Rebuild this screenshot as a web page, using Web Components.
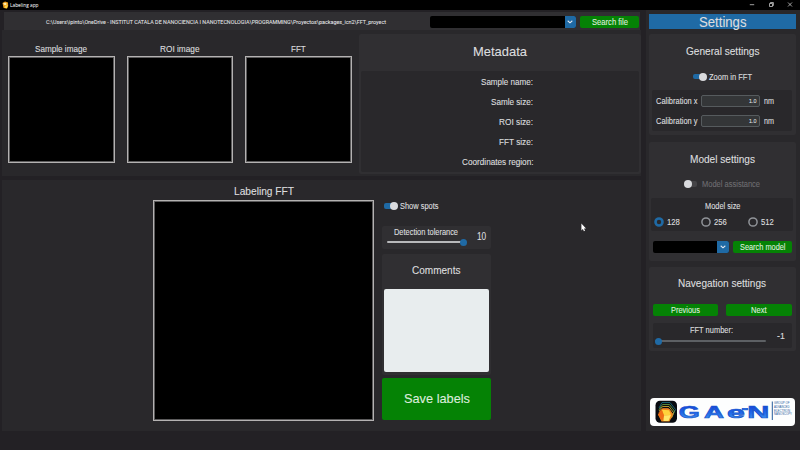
<!DOCTYPE html>
<html lang="en">
<head>
<meta charset="utf-8">
<title>Labeling app</title>
<style>
html,body{margin:0;width:800px;height:450px;overflow:hidden;background:#232125}
body{font-family:"Liberation Sans",Arial,sans-serif;color:#dcdddf}
</style>
</head>
<body>
<labeling-app></labeling-app>
<script>
const define = (name, css, html, init) => {
  const tpl = document.createElement('template');
  tpl.innerHTML = `<style>*{box-sizing:border-box}${css}</style>${html}`;
  customElements.define(name, class extends HTMLElement {
    connectedCallback() {
      if (this.shadowRoot) return;
      this.attachShadow({mode: 'open'}).append(tpl.content.cloneNode(true));
      if (init) init(this, this.shadowRoot);
    }
  });
};

/* Single-line label: size = font size, w = drawn width, h = line box height */
define('fit-text',
  ':host{display:block;flex:none;white-space:nowrap}span{display:inline-block;transform-origin:0 50%;-webkit-text-stroke:.12px currentColor}',
  '<span><slot></slot></span>',
  (el, root) => {
    const h = el.getAttribute('h') || 12, w = +el.getAttribute('w');
    el.style.fontSize = el.getAttribute('size') + 'px';
    el.style.height = el.style.lineHeight = h + 'px';
    el.style.width = w + 'px';
    const span = root.querySelector('span');
    span.style.transform = `scaleX(${w / span.getBoundingClientRect().width})`;
  });

define('ui-card', ':host{display:flex;flex-direction:column;box-sizing:border-box;background:var(--fill,#302f32);border-radius:2px;flex:none}', '<slot></slot>');
define('ui-button', ':host{display:flex;align-items:center;justify-content:center;box-sizing:border-box;background:#058205;border-radius:2px;height:12px;color:#dcecdc;flex:none}', '<slot></slot>');
define('ui-combo',
  ':host{display:flex;height:12px;background:#000;border-radius:2px;overflow:hidden;justify-content:flex-end;flex:none}div{width:11.5px;background:#1f6aa5;display:flex;align-items:center;justify-content:center}',
  '<div><svg width="6" height="4" viewBox="0 0 6 4"><path d="M1 1 3 2.8 5 1" fill="none" stroke="#dce4ee" stroke-width="1.1" stroke-linecap="round"/></svg></div>');
define('ui-toggle',
  ':host{display:flex;width:14px;height:8px;align-items:center;flex:none}div{width:13px;height:5.4px;border-radius:2px;background:#1f6aa5;display:flex;align-items:center;justify-content:flex-end}i{width:8px;height:8px;border-radius:50%;background:#d9dadd;flex:none;margin-right:-1px}:host([off]) div{background:#454447;justify-content:flex-start}:host([off]) i{margin:0}',
  '<div><i></i></div>');
define('ui-slider',
  ':host{display:flex;height:7px;align-items:center;flex:none}div{flex:1;height:2px;border-radius:1px;background:var(--track,#aaa);display:flex;align-items:center;justify-content:flex-end}i{width:7px;height:7px;border-radius:50%;background:#1f6aa5;flex:none;margin:0 -2px 0 0}:host([start]) div{justify-content:flex-start;height:1.5px}:host([start]) i{margin:0}',
  '<div><i></i></div>');
define('ui-radio',
  ':host{display:flex;align-items:center;gap:2.5px;height:12px;flex:none}svg{width:10px;height:10px}circle{fill:none;stroke:#919499;stroke-width:1.5}:host([on]) circle{stroke:#1f6aa5;stroke-width:2.6;r:3.5px}',
  '<svg viewBox="0 0 10 10"><circle cx="5" cy="5" r="4.1"/></svg><slot></slot>');
define('ui-entry', ':host{display:flex;align-items:center;justify-content:flex-end;box-sizing:border-box;width:59px;height:12px;padding-right:2.5px;background:#343638;border:1px solid #565b5e;border-radius:2px;flex:none}', '<slot></slot>');
define('calibration-row', ':host{display:flex;align-items:center;height:20px;gap:4px;padding-left:3.5px}', '<slot></slot><ui-entry><fit-text size="6" w="7.5" h="10">1.0</fit-text></ui-entry><fit-text size="8.8" w="10">nm</fit-text>');
define('image-frame',
  ':host{display:flex;flex-direction:column;align-items:center;flex:none}div{background:#000;border:1px solid #b4b2b2;box-shadow:inset 0 0 0 1px #5b5a5b;width:var(--side);height:var(--side);margin-top:var(--gap,0)}',
  '<slot></slot><div></div>');

define('title-bar',
  ':host{display:flex;height:10px;background:#000;align-items:center;padding:0 7px 0 2px;box-sizing:border-box;font-family:"Open Sans",sans-serif}.logo{margin-right:1px}.g{flex:1}.win{width:45px}',
  `<svg class="logo" width="7" height="8" viewBox="0 0 7 8"><path d="M.5 2 3 .6 6 1.6 6.2 5 5 7.4 1.6 7Z" fill="#eb9c19"/><path d="m1 2.6 2.5-.9L5 3 3 4.6Z" fill="#fff0b0"/><path d="M3.2 5 5.8 3.8 5 7.2 2.6 7Z" fill="#ffd447"/></svg>
  <fit-text size="5.8" w="28.5" h="10">Labeling app</fit-text><span class="g"></span>
  <svg class="win" height="8" viewBox="0 0 45 8" fill="none" stroke="#c8c8c8" stroke-width=".8"><path d="M1.8 3.7h4.4M21.5 2.5h3v3h-3zM22.4 2.5v-1h3v3h-.9M40 1.5l4 4M44 1.5l-4 4"/></svg>`);

define('file-bar',
  ':host{display:flex;align-items:center;height:18px;background:#302f32;margin-left:2px;padding-left:42px;box-sizing:border-box;width:636px}fit-text{font-family:Roboto,sans-serif;margin-top:1px}.b{font-family:"Liberation Sans",sans-serif;margin-top:0}ui-combo{width:146.5px;margin:1px 4px 0 43.5px}ui-button{width:59px;margin-top:1px}',
  `<fit-text size="6.1" w="340">C:\\Users\\ipinto\\OneDrive - INSTITUT CATALA DE NANOCIENCIA I NANOTECNOLOGIA\\PROGRAMMING\\Proyectos\\packages_icn2\\FFT_proyect</fit-text>
  <ui-combo></ui-combo><ui-button><fit-text class="b" size="8.5" w="36">Search file</fit-text></ui-button>`);

define('metadata-card',
  ':host{display:block}.card{width:282px;height:140px;padding:11px 2px 2px;align-items:center}.in{--fill:#29282b;width:278px;height:101px;margin-top:12px;padding:1px 106px 0 0;align-items:flex-end}',
  `<ui-card class="card"><fit-text size="13.6" w="54" h="14">Metadata</fit-text><ui-card class="in">
  <fit-text size="9" w="52" h="20">Sample name:</fit-text><fit-text size="9" w="42" h="20">Samle size:</fit-text><fit-text size="9" w="34" h="20">ROI size:</fit-text><fit-text size="9" w="34" h="20">FFT size:</fit-text><fit-text size="9" w="71.5" h="20">Coordinates region:</fit-text>
  </ui-card></ui-card>`);

define('top-panel',
  ':host{display:flex;background:#29282b;height:146px;padding:4px 0 0 6px;box-sizing:border-box;justify-content:space-between}.imgs{display:flex;gap:12px;padding-top:9px}image-frame{--side:106.5px;--gap:1px}',
  `<div class="imgs"><image-frame><fit-text size="9.2" w="52">Sample image</fit-text></image-frame><image-frame><fit-text size="9.2" w="39.5">ROI image</fit-text></image-frame><image-frame><fit-text size="9.2" w="14.8">FFT</fit-text></image-frame></div><metadata-card></metadata-card>`);

define('labeling-panel',
  `:host{display:flex;background:#29282b;height:251px;margin-top:4px;padding-left:151px;box-sizing:border-box}
  image-frame{--side:221px;--gap:1.5px;padding-top:5px}
  .side{width:109px;margin-left:8px;padding-top:20px}
  .row{display:flex;align-items:center;gap:2px;height:12px;padding-left:1.5px}
  .tol{height:23px;margin-top:13.5px;flex-direction:row;padding:0 0 0 5px}
  .tol ui-slider{width:78px;margin-top:1px;--track:#b7b8ba}
  .tol fit-text{margin-left:7px}.tol fit-text.n{margin:5px 0 0 11.5px}
  .com{height:121px;margin-top:5.5px;padding-top:10px;align-items:center}
  .area{width:104.5px;height:83.5px;background:#e8edee;border-radius:2px;margin-top:12.5px}
  .save{height:42px;margin-top:3px}`,
  `<image-frame><fit-text size="11" w="60" h="13">Labeling FFT</fit-text></image-frame>
  <div class="side"><div class="row"><ui-toggle></ui-toggle><fit-text size="8.5" w="38.5">Show spots</fit-text></div>
  <ui-card class="tol"><div><fit-text size="8.5" w="64">Detection tolerance</fit-text><ui-slider></ui-slider></div><fit-text class="n" size="10" w="9.2">10</fit-text></ui-card>
  <ui-card class="com"><fit-text size="11" w="48.5">Comments</fit-text><div class="area"></div></ui-card>
  <ui-button class="save"><fit-text size="13.6" w="66" h="14">Save labels</fit-text></ui-button></div>`);

define('gaen-logo',
  ':host{display:block;width:145px;height:28px}svg{display:block;overflow:visible}',
  `<svg width="145" height="28" viewBox="0 0 145 28"><defs><linearGradient id="b" x1="0" y1="0" x2="0" y2="1"><stop offset="0" stop-color="#1238d2"/><stop offset=".5" stop-color="#1f66e8"/><stop offset="1" stop-color="#49a4ee"/></linearGradient></defs>
  <rect width="145" height="28" rx="4" fill="#fdfefe"/><rect x="5.5" y="2.8" width="21.5" height="22" rx="4.5" fill="#080b10"/>
  <g fill="none" stroke-width=".9"><path d="M9 10 12 4.5h8l5.5 7-3 6" stroke="#17657b"/><path d="M9 11.5 12.5 6.5h7l5 6.5-2.5 6" stroke="#61953f"/><path d="M9 13 12.5 8.5h6.5l4.5 6-2 5.5" stroke="#c2a32d"/><path d="M9 14.5 12.5 10.5h6l4 5.5-2 5" stroke="#e17522"/></g>
  <path d="M8 16.5 12 11h7.5l3.5 5.5-3.5 7h-8Z" fill="#eb861c"/><path d="m12 11.8 7 .5 2 4.5-7 .7Z" fill="#ffd23c"/><path d="m14 17.5 7-.5-2.5 6h-5Z" fill="#ffe669"/><path d="m8 16.5 3.5-5 2.5 6-2 5.5Z" fill="#ef6c15"/>
  <g font-family="Liberation Sans" font-weight="700" font-size="16.2" fill="url(#b)" stroke="#2058cc" stroke-width=".7"><text x="28.8" y="20.3" textLength="21" lengthAdjust="spacingAndGlyphs">G</text><text x="54" y="20.3" textLength="20" lengthAdjust="spacingAndGlyphs">A</text><text x="77" y="20.3" textLength="17.8" lengthAdjust="spacingAndGlyphs">e</text><text x="91.5" y="15.2" font-size="14" textLength="6.8" lengthAdjust="spacingAndGlyphs">-</text><text x="97.3" y="20.3" textLength="22" lengthAdjust="spacingAndGlyphs">N</text></g>
  <path d="M122.3 3.5V22" stroke="#245b9b" stroke-width="1"/>
  <g font-family="Liberation Sans" font-size="4" fill="#245b9b"><text x="124" y="6.3" textLength="15.5" lengthAdjust="spacingAndGlyphs">GROUP OF</text><text x="124" y="10" textLength="15.5" lengthAdjust="spacingAndGlyphs">ADVANCED</text><text x="124" y="13.7" textLength="16" lengthAdjust="spacingAndGlyphs">ELECTRON</text><text x="124" y="17.3" textLength="18" lengthAdjust="spacingAndGlyphs">NANOSCOPY</text></g></svg>`);

define('settings-panel',
  `:host{display:flex;flex-direction:column;background:#29282b;width:154px;height:421px;padding:4px 0 0 3px;box-sizing:border-box}
  .head{width:147px;height:15px;background:#1f6aa5;display:flex;align-items:center;justify-content:center}
  .card{width:147px;align-items:center;padding-right:.5px}.in{--fill:#29282b}
  .row{display:flex;align-items:center;flex:none}
  .gen{height:101px;margin-top:5px;padding-top:11px}.mod{height:119px;margin-top:7px;padding-top:10.5px}.nav{height:84px;margin-top:6px;padding-top:10px}
  .sw{gap:2px;margin-top:13.5px}.cal{width:140px;height:41px;margin-top:7.5px;padding-top:.5px}
  .off{color:#6d6c70;gap:4px;margin-top:13.5px}.size{width:142px;height:33px;margin-top:8px;align-items:center;padding-top:2px}
  .radios{width:100%;padding-left:3px;margin-top:4px}.radios ui-radio{width:47px}
  .act{width:139px;justify-content:space-between;margin-top:10px}.act ui-combo{width:76px}.act .m{width:59px}
  .nb{width:139px;justify-content:space-between;margin-top:15px}.nb ui-button{width:65.5px}
  .num{width:139px;height:25px;margin-top:7px;flex-direction:row;padding:.5px 0 0 2px}.num ui-slider{width:111px;--track:#5d6064;margin-top:2px}.num .t{margin-left:35.5px}.num .v{margin:6.5px 0 0 11.5px}
  gaen-logo{margin:47px 0 0 1px}`,
  `<div class="head"><fit-text size="14" w="47.5" h="14">Settings</fit-text></div>
  <ui-card class="card gen"><fit-text size="11" w="73.5">General settings</fit-text><div class="row sw"><ui-toggle></ui-toggle><fit-text size="8.5" w="43">Zoom in FFT</fit-text></div>
  <ui-card class="in cal"><calibration-row><fit-text size="8.5" w="41.5">Calibration x</fit-text></calibration-row><calibration-row><fit-text size="8.5" w="41.5">Calibration y</fit-text></calibration-row></ui-card></ui-card>
  <ui-card class="card mod"><fit-text size="11" w="65">Model settings</fit-text><div class="row off"><ui-toggle off></ui-toggle><fit-text size="8.5" w="58">Model assistance</fit-text></div>
  <ui-card class="in size"><fit-text size="8.5" w="35.5">Model size</fit-text><div class="row radios"><ui-radio on><fit-text size="8.5" w="12.8">128</fit-text></ui-radio><ui-radio><fit-text size="8.5" w="12.8">256</fit-text></ui-radio><ui-radio><fit-text size="8.5" w="12.8">512</fit-text></ui-radio></div></ui-card>
  <div class="row act"><ui-combo></ui-combo><ui-button class="m"><fit-text size="8.5" w="45.5">Search model</fit-text></ui-button></div></ui-card>
  <ui-card class="card nav"><fit-text size="11" w="88">Navegation settings</fit-text><div class="row nb"><ui-button><fit-text size="8.5" w="29">Previous</fit-text></ui-button><ui-button><fit-text size="8.5" w="15.5">Next</fit-text></ui-button></div>
  <ui-card class="in num"><div><fit-text class="t" size="8.5" w="43">FFT number:</fit-text><ui-slider start></ui-slider></div><fit-text class="v" size="9.6" w="7.8">-1</fit-text></ui-card></ui-card>
  <gaen-logo></gaen-logo>`);

define('labeling-app',
  ':host{display:flex;flex-direction:column;width:800px;height:450px;background:#232125}.main{display:flex;justify-content:space-between}.left{width:641px;padding:2px 0 0 2px}.cursor{position:absolute;left:580.5px;top:223px}',
  `<title-bar></title-bar><div class="main"><div class="left"><file-bar></file-bar><top-panel></top-panel><labeling-panel></labeling-panel></div><settings-panel></settings-panel></div>
  <svg class="cursor" width="6" height="9" viewBox="0 0 6 9"><path d="M.4.4v7l1.5-1.4 1 2.3 1.1-.5-1-2.2h2Z" fill="#fff"/></svg>`);
</script>
</body>
</html>
